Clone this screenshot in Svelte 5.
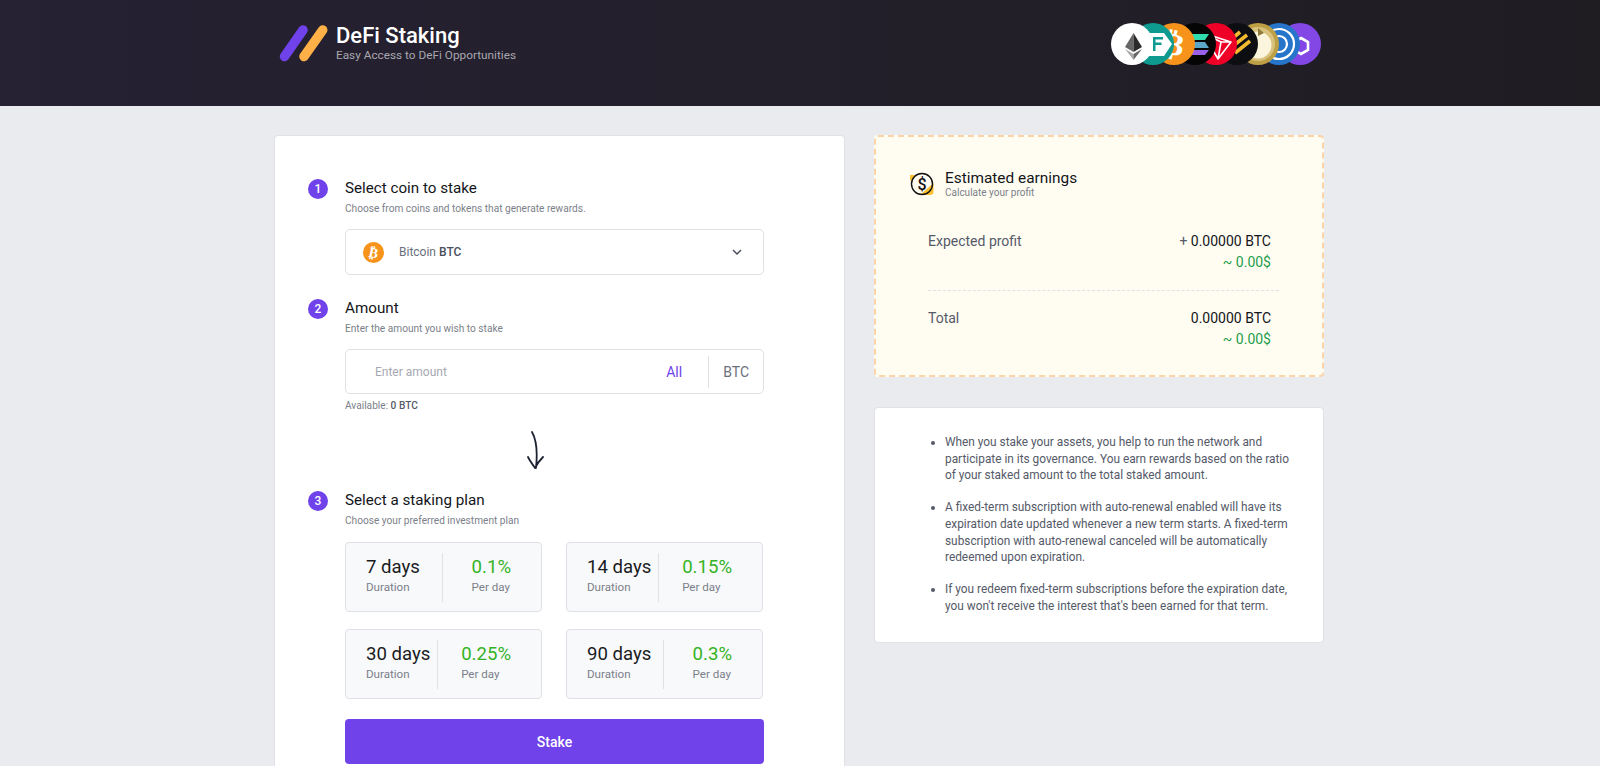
<script>
  const plans = [
    { days: '7 days', rate: '0.1%', pad: 29 },
    { days: '14 days', rate: '0.15%', pad: 23 },
    { days: '30 days', rate: '0.25%', pad: 23 },
    { days: '90 days', rate: '0.3%', pad: 29 }
  ];

  const notes = [
    'When you stake your assets, you help to run the network and participate in its governance. You earn rewards based on the ratio of your staked amount to the total staked amount.',
    'A fixed-term subscription with auto-renewal enabled will have its expiration date updated whenever a new term starts. A fixed-term subscription with auto-renewal canceled will be automatically redeemed upon expiration.',
    "If you redeem fixed-term subscriptions before the expiration date, you won't receive the interest that's been earned for that term."
  ];

  let amount = $state('');
</script>

<div class="page">
  <header>
    <div class="header-inner">
      <div class="brand">
        <svg width="50" height="38" viewBox="0 0 50 38">
          <line x1="5.5" y1="32.5" x2="24" y2="6" stroke="#6f42ea" stroke-width="9.5" stroke-linecap="round" />
          <line x1="25" y1="32.5" x2="43.7" y2="6" stroke="#ffb046" stroke-width="9.5" stroke-linecap="round" />
        </svg>
        <div class="brand-text">
          <div class="brand-name">DeFi Staking</div>
          <div class="brand-sub">Easy Access to DeFi Opportunities</div>
        </div>
      </div>

      <div class="coins">
        <span class="coin" style="background:#fff;z-index:9">
          <svg viewBox="0 0 42 42">
            <path d="M22.5 10L14 24l8.500 5z" fill="#666" />
            <path d="M22.5 10L31 24l-8.500 5z" fill="#2b2b2b" />
            <path d="M14 26l8.500 11v-6z" fill="#aaa" />
            <path d="M31 26l-8.500 11v-6z" fill="#666" />
          </svg>
        </span>
        <span class="coin" style="background:#0f9a90;z-index:8">
          <svg viewBox="0 0 42 42">
            <path d="M2 10h30l8 11-8 12H2z" fill="#fff" />
            <path d="M21 14h10v2.500h-7.500v3h6V22h-6v6H21z" fill="#0f9a90" />
          </svg>
        </span>
        <span class="coin" style="background:#f7931a;z-index:7">
          <svg viewBox="0 0 42 42">
            <text x="21" y="32" text-anchor="middle" font-size="31" font-weight="700" fill="#fff" font-family="Roboto" transform="rotate(12 21 21)">₿</text>
          </svg>
        </span>
        <span class="coin" style="background:#050505;z-index:6">
          <svg viewBox="0 0 42 42">
            <path d="M9 11h26l-4 6H5z" fill="#2fdcae" />
            <path d="M5 19h26l4 6H9z" fill="#5aa6c8" />
            <path d="M9 27h26l-4 5H5z" fill="#9a5fe8" />
          </svg>
        </span>
        <span class="coin" style="background:#ef0027;z-index:5">
          <svg viewBox="0 0 42 42">
            <path d="M8 10l28 9-13 17zM8 10l15 26 3-17zM26 19l10 0" fill="none" stroke="#fff" stroke-width="1.6" stroke-linejoin="round" />
          </svg>
        </span>
        <span class="coin" style="background:#0c0e12;z-index:4">
          <svg viewBox="0 0 42 42">
            <g stroke="#f3ba2f" stroke-width="3.600">
              <line x1="18" y1="14" x2="24" y2="9" />
              <line x1="13" y1="26" x2="31" y2="12" />
              <line x1="19" y1="30" x2="34" y2="18" />
            </g>
          </svg>
        </span>
        <span class="coin" style="background:#bd9f45;z-index:3">
          <svg viewBox="0 0 42 42">
            <circle cx="21" cy="21" r="17" fill="#d8c27c" />
            <circle cx="21" cy="22" r="13.500" fill="#fbf5dd" />
            <path d="M21 5l6 5-6 3z" fill="#8f7a3a" />
          </svg>
        </span>
        <span class="coin" style="background:#2775ca;z-index:2">
          <svg viewBox="0 0 42 42">
            <circle cx="21" cy="21" r="8" fill="none" stroke="#fff" stroke-width="2.200" />
            <circle cx="21" cy="21" r="15" fill="none" stroke="#fff" stroke-width="2.200" />
          </svg>
        </span>
        <span class="coin" style="background:#8247e5;z-index:1">
          <svg viewBox="0 0 42 42">
            <path d="M22 15l7 4v8l-7 4-7-4v-8z" fill="none" stroke="#fff" stroke-width="2.600" />
          </svg>
        </span>
      </div>
    </div>
  </header>

  <main>
    <section class="card form-card">
      <div class="step">
        <span class="badge">1</span>
        <div>
          <h2>Select coin to stake</h2>
          <p>Choose from coins and tokens that generate rewards.</p>
        </div>
      </div>
      <button class="select">
        <svg width="21" height="21" viewBox="0 0 21 21">
          <circle cx="10.5" cy="10.5" r="10.5" fill="#f7931a" />
          <text x="10.5" y="15.5" text-anchor="middle" font-size="14" font-weight="700" fill="#fff" font-family="Roboto" transform="rotate(12 10.5 10.5)">₿</text>
        </svg>
        <span class="coin-name">Bitcoin <b>BTC</b></span>
        <svg class="chev" width="12" height="8" viewBox="0 0 12 8">
          <path d="M2 2l4 4 4-4" fill="none" stroke="#4a4f5c" stroke-width="1.5" />
        </svg>
      </button>

      <div class="step second">
        <span class="badge">2</span>
        <div>
          <h2>Amount</h2>
          <p>Enter the amount you wish to stake</p>
        </div>
      </div>
      <div class="amount">
        <input type="text" placeholder="Enter amount" bind:value={amount} />
        <span class="all">All</span>
        <span class="unit">BTC</span>
      </div>
      <div class="available">Available: <b>0 BTC</b></div>

      <div class="arrow">
        <svg width="20" height="40" viewBox="0 0 20 40">
          <path d="M6 1C10 8 12 18 10 37M2 26c2 4 5 8 7 11 2-4 5-8 8-11" fill="none" stroke="#1d2233" stroke-width="1.800" stroke-linecap="round" stroke-linejoin="round" />
        </svg>
      </div>

      <div class="step">
        <span class="badge">3</span>
        <div>
          <h2>Select a staking plan</h2>
          <p>Choose your preferred investment plan</p>
        </div>
      </div>
      <div class="plans">
        {#each plans as plan}
          <div class="plan">
            <div class="plan-left">
              <div class="big">{plan.days}</div>
              <div class="small">Duration</div>
            </div>
            <div class="plan-right" style="padding-left:{plan.pad}px">
              <div class="big green">{plan.rate}</div>
              <div class="small">Per day</div>
            </div>
          </div>
        {/each}
      </div>
      <button class="stake">Stake</button>
    </section>

    <aside>
      <section class="card earnings">
        <div class="earn-head">
          <svg width="26" height="26" viewBox="0 0 26 26">
            <path d="M1 4h6L1 10zM24.500 12v9q0 3-3.500 3H11z" fill="#fcc132" />
            <circle cx="13" cy="13" r="10.5" fill="none" stroke="#111" stroke-width="1.4" />
            <text x="13" y="18.5" text-anchor="middle" font-size="16" font-weight="500" fill="#111" font-family="Roboto">$</text>
          </svg>
          <div>
            <h3>Estimated earnings</h3>
            <p>Calculate your profit</p>
          </div>
        </div>
        <div class="earn-row">
          <span class="label">Expected profit</span>
          <div class="vals">
            <div class="val"><span class="plus">+</span> 0.00000 BTC</div>
            <div class="usd">~ 0.00$</div>
          </div>
        </div>
        <div class="sep"></div>
        <div class="earn-row">
          <span class="label">Total</span>
          <div class="vals">
            <div class="val">0.00000 BTC</div>
            <div class="usd">~ 0.00$</div>
          </div>
        </div>
      </section>

      <section class="card info">
        <ul>
          {#each notes as note}
            <li>{note}</li>
          {/each}
        </ul>
      </section>
    </aside>
  </main>
</div>

<style>
  :global(body) {
    margin: 0;
    background: #e9ebef;
    font-family: Roboto, "Liberation Sans", sans-serif;
  }

  .page {
    height: 100vh;
    overflow: hidden;
  }

  header {
    height: 106px;
    background: linear-gradient(90deg, #262133 0%, #1f1d22 100%);
  }

  .header-inner {
    width: 1050px;
    margin: 0 auto;
    padding: 23px 2px 0 0;
    display: flex;
    justify-content: space-between;
  }

  .brand {
    display: flex;
    align-items: flex-start;
    padding-left: 5px;
  }

  .brand svg {
    margin-top: 1px;
  }

  .brand-text {
    margin-left: 7px;
  }

  .brand-name {
    color: #fff;
    font-size: 22px;
    font-weight: 500;
    line-height: 26px;
  }

  .brand-sub {
    color: #a9a7ae;
    font-size: 11.8px;
    line-height: 12px;
  }

  .coins {
    display: flex;
    padding-right: 3px;
  }

  .coin {
    position: relative;
    display: block;
    width: 42px;
    height: 42px;
    border-radius: 50%;
    overflow: hidden;
    margin-left: -21px;
  }

  .coin svg {
    display: block;
    width: 100%;
    height: 100%;
  }

  main {
    width: 1050px;
    margin: 29px auto 0;
    padding-right: 2px;
    display: flex;
    gap: 29px;
    align-items: flex-start;
  }

  .card {
    background: #fff;
    border: 1px solid #dfe1e6;
    border-radius: 4px;
    box-sizing: border-box;
  }

  .form-card {
    width: 571px;
    padding: 43px 80px 60px 33px;
    flex-shrink: 0;
  }

  .step {
    display: flex;
    gap: 17px;
    align-items: flex-start;
  }

  .step.second {
    margin-top: 24px;
  }

  .badge {
    width: 20px;
    height: 20px;
    border-radius: 50%;
    background: #6f42ea;
    color: #fff;
    font-size: 12px;
    font-weight: 500;
    line-height: 20px;
    text-align: center;
    flex-shrink: 0;
  }

  h2 {
    margin: 0;
    color: #14151a;
    font-size: 15.2px;
    font-weight: 400;
    line-height: 18px;
  }

  .step p {
    margin: 5px 0 0;
    color: #7b7f8a;
    font-size: 10.15px;
    line-height: 13px;
  }

  .select {
    display: flex;
    align-items: center;
    box-sizing: border-box;
    width: 419px;
    height: 46px;
    margin: 14px 0 0 37px;
    padding: 0 20px 0 17px;
    background: #fff;
    border: 1px solid #dfe1e6;
    border-radius: 5px;
    font-family: inherit;
  }

  .coin-name {
    margin-left: 15px;
    color: #6b6f7b;
    font-size: 12px;
  }

  .coin-name b {
    color: #4a4f5c;
    font-weight: 500;
  }

  .chev {
    margin-left: auto;
  }

  .amount {
    display: flex;
    align-items: center;
    box-sizing: border-box;
    width: 419px;
    height: 45px;
    margin: 14px 0 0 37px;
    background: #fff;
    border: 1px solid #dfe1e6;
    border-radius: 5px;
  }

  .amount input {
    flex: 1;
    min-width: 0;
    border: none;
    outline: none;
    padding: 0 0 0 29px;
    background: none;
    font-family: inherit;
    font-size: 12px;
    color: #333;
  }

  .amount input::placeholder {
    color: #a6a8b2;
  }

  .all {
    color: #6f42ea;
    font-size: 14px;
    margin-right: 26px;
  }

  .unit {
    height: 32px;
    line-height: 32px;
    border-left: 1px solid #dfe1e6;
    padding: 0 14px 0 14px;
    color: #6b6f7b;
    font-size: 14px;
  }

  .available {
    margin: 5px 0 0 37px;
    color: #7b7f8a;
    font-size: 10.15px;
    line-height: 13px;
  }

  .available b {
    color: #555a68;
    font-weight: 500;
  }

  .arrow {
    display: flex;
    justify-content: center;
    margin: 19px 0 20px 0;
  }

  .arrow svg {
    display: block;
  }

  .plans {
    display: grid;
    grid-template-columns: 197px 197px;
    justify-content: space-between;
    gap: 17px 24px;
    margin: 15px 0 0 37px;
    width: 418px;
  }

  .plan {
    display: flex;
    align-items: stretch;
    box-sizing: border-box;
    height: 70px;
    padding: 10px 30px 9px 20px;
    background: #f8f9fb;
    border: 1px solid #dfe1e6;
    border-radius: 4px;
  }

  .plan-left {
    flex: 1 1 auto;
    min-width: 0;
    padding-top: 3px;
    border-right: 1px solid #dfe1e6;
  }

  .plan-right {
    flex: 0 0 auto;
    padding-top: 3px;
  }

  .big {
    color: #1a1c22;
    font-size: 18.6px;
    line-height: 22px;
    white-space: nowrap;
  }

  .green {
    color: #35b325;
  }

  .small {
    color: #7b7f8a;
    font-size: 11.6px;
    line-height: 16px;
    margin-top: 1px;
    white-space: nowrap;
  }

  .stake {
    display: block;
    width: 419px;
    height: 45px;
    margin: 20px 0 0 37px;
    background: #6f42ea;
    color: #fff;
    border: none;
    border-radius: 4px;
    font-family: inherit;
    font-size: 14px;
    font-weight: 500;
  }

  aside {
    width: 450px;
    display: flex;
    flex-direction: column;
    gap: 30px;
  }

  .earnings {
    height: 242px;
    padding: 33px 51px 0 33px;
    background: #fffdf2;
    border: 2px dashed #fdd4a8;
  }

  .earn-head {
    display: flex;
    gap: 10px;
    align-items: flex-start;
    margin-bottom: 31px;
  }

  .earn-head svg {
    margin-top: 1px;
  }

  h3 {
    margin: 0;
    color: #14151a;
    font-size: 15.4px;
    font-weight: 400;
    line-height: 16px;
  }

  .earn-head p {
    margin: 0;
    color: #7b7f8a;
    font-size: 10px;
    line-height: 14px;
  }

  .earn-row {
    display: flex;
    justify-content: space-between;
    padding-left: 19px;
    font-size: 14px;
    line-height: 20px;
  }

  .label {
    color: #555a68;
  }

  .vals {
    text-align: right;
  }

  .val {
    color: #14151a;
    font-weight: 400;
    font-size: 14px;
  }

  .plus {
    color: #555a68;
  }

  .usd {
    color: #1f9d4d;
    font-size: 14px;
    margin-top: 1px;
  }

  .sep {
    margin: 18px -8px 17px 19px;
    border-top: 1px dashed #dfe1e6;
  }

  .info {
    height: 236px;
    padding: 26px 25px 0 70px;
  }

  ul {
    margin: 0;
    padding: 0;
  }

  li {
    color: #555a68;
    font-size: 11.85px;
    line-height: 16.6px;
    margin-bottom: 15.6px;
  }
</style>
